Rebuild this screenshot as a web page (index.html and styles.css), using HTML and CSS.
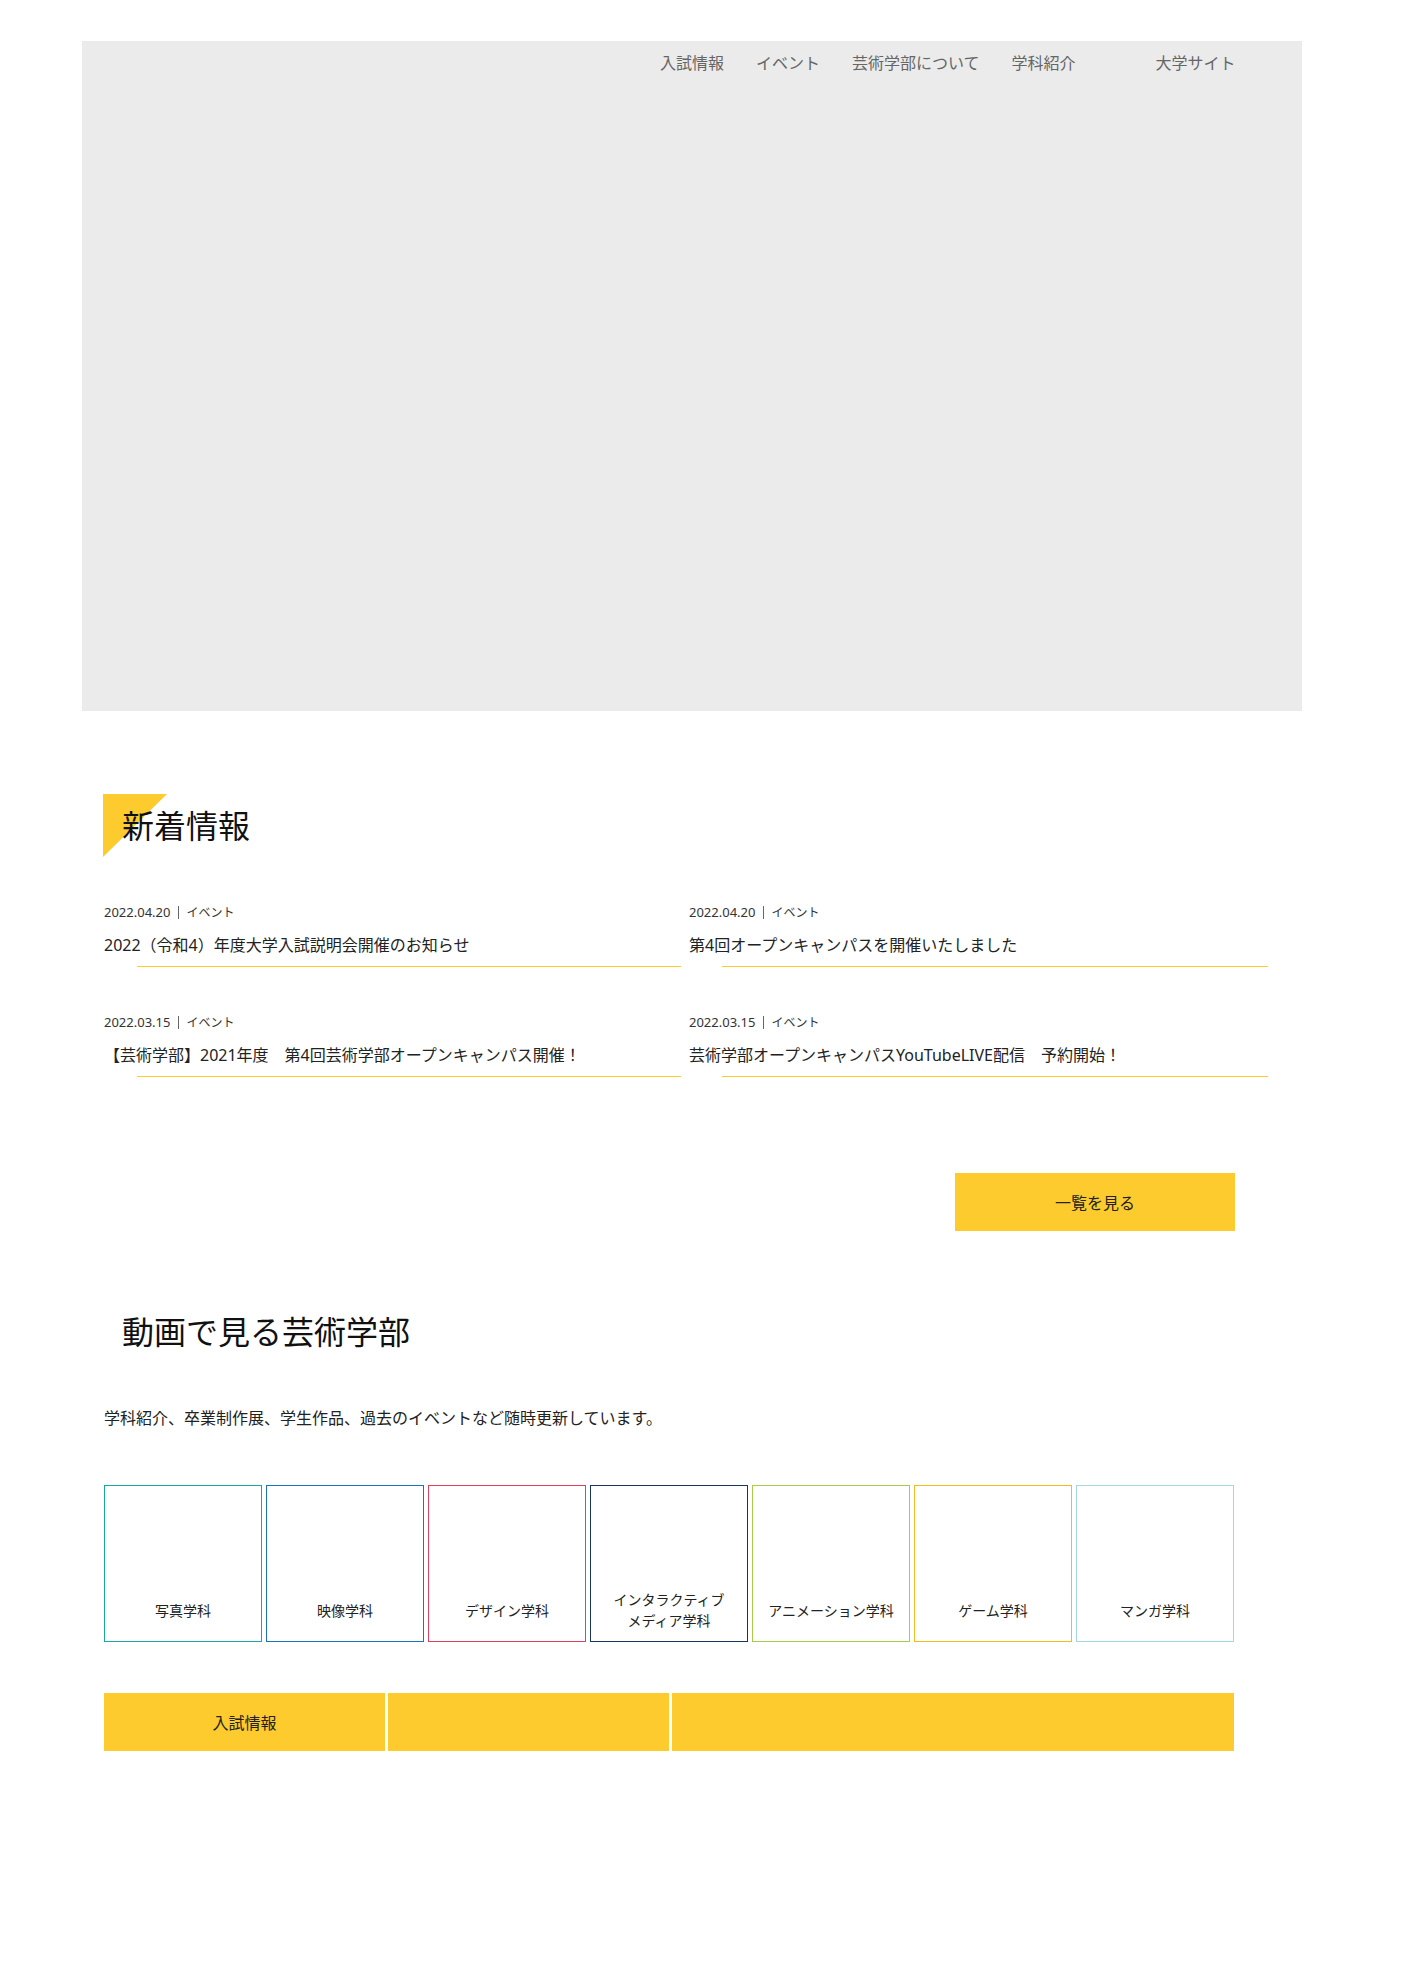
FILE: index.html
```html
<!DOCTYPE html>
<html lang="ja">
<head>
<meta charset="utf-8">
<title>芸術学部</title>
<link rel="stylesheet" href="styles.css">
</head>
<body>
<header class="hero">
  <nav class="gnav">
    <a class="gnav-item">入試情報</a>
    <a class="gnav-item">イベント</a>
    <a class="gnav-item">芸術学部について</a>
    <a class="gnav-item">学科紹介</a>
    <a class="gnav-item gnav-item--univ">大学サイト</a>
  </nav>
</header>
<main class="main">
  <section class="news">
    <h2 class="sec-title sec-title--mark">新着情報</h2>
    <ul class="news-list">
      <li class="news-item">
        <p class="news-meta"><span class="news-date">2022.04.20</span><span class="news-cat">イベント</span></p>
        <p class="news-title">2022（令和4）年度大学入試説明会開催のお知らせ</p>
        <div class="news-rule"></div>
      </li>
      <li class="news-item">
        <p class="news-meta"><span class="news-date">2022.04.20</span><span class="news-cat">イベント</span></p>
        <p class="news-title">第4回オープンキャンパスを開催いたしました</p>
        <div class="news-rule"></div>
      </li>
      <li class="news-item">
        <p class="news-meta"><span class="news-date">2022.03.15</span><span class="news-cat">イベント</span></p>
        <p class="news-title">【芸術学部】2021年度　第4回芸術学部オープンキャンパス開催！</p>
        <div class="news-rule"></div>
      </li>
      <li class="news-item">
        <p class="news-meta"><span class="news-date">2022.03.15</span><span class="news-cat">イベント</span></p>
        <p class="news-title">芸術学部オープンキャンパスYouTubeLIVE配信　予約開始！</p>
        <div class="news-rule"></div>
      </li>
    </ul>
    <div class="more-wrap"><a class="more-btn">一覧を見る</a></div>
  </section>
  <section class="movie">
    <h2 class="sec-title">動画で見る芸術学部</h2>
    <p class="movie-lead">学科紹介、卒業制作展、学生作品、過去のイベントなど随時更新しています。</p>
    <ul class="dept-list">
      <li class="dept dept--photo"><span class="dept-name">写真学科</span></li>
      <li class="dept dept--film"><span class="dept-name">映像学科</span></li>
      <li class="dept dept--design"><span class="dept-name">デザイン学科</span></li>
      <li class="dept dept--media"><span class="dept-name">インタラクティブ<br>メディア学科</span></li>
      <li class="dept dept--anime"><span class="dept-name">アニメーション学科</span></li>
      <li class="dept dept--game"><span class="dept-name">ゲーム学科</span></li>
      <li class="dept dept--manga"><span class="dept-name">マンガ学科</span></li>
    </ul>
  </section>
  <nav class="bottom-links">
    <a class="bl-item">入試情報</a>
    <a class="bl-item"></a>
    <a class="bl-item"></a>
  </nav>
</main>
</body>
</html>
```
FILE: styles.css
```css
body {
  margin: 0;
  background: #fff;
  color: #222;
  font-family: "Noto Sans CJK JP", "Noto Sans", "Liberation Sans", sans-serif;
}

a { color: inherit; text-decoration: none; }

.hero {
  margin: 41px 0 0 82px;
  width: 1220px;
  height: 670px;
  background: #ebebeb;
}

.gnav {
  display: flex;
  padding: 9px 0 0 578px;
}

.gnav-item {
  font-size: 16px;
  line-height: 24px;
  color: #666;
  margin-right: 32px;
}

.gnav-item--univ { margin-left: 48px; }

.main {
  margin-left: 104px;
  width: 1130px;
}

.news { padding-top: 89px; }

.sec-title {
  margin: 0;
  padding-left: 18px;
  font-size: 32px;
  line-height: 48px;
  font-weight: 400;
  color: #111;
  position: relative;
  isolation: isolate;
}

.sec-title--mark::before {
  content: "";
  position: absolute;
  left: -1px;
  top: -6px;
  width: 64px;
  height: 63px;
  background: #fdcb2e;
  clip-path: polygon(0 0, 100% 0, 0 100%);
  z-index: -1;
}

.news-list {
  list-style: none;
  margin: 55px 0 0;
  padding: 0;
  width: 1164px;
  display: grid;
  grid-template-columns: 577px 579px;
  column-gap: 8px;
  row-gap: 46px;
}

.news-item {
  font-family: "Noto Sans", "Noto Sans CJK JP", sans-serif;
}

.news-meta {
  margin: 0;
  display: flex;
  align-items: center;
  font-size: 12px;
  line-height: 18px;
  color: #333;
}

.news-date { font-size: 13px; }

.news-cat {
  margin-left: 8px;
  padding-left: 7px;
  border-left: 1px solid #666;
  line-height: 13px;
}

.news-title {
  margin: 12px 0 0;
  font-size: 16px;
  line-height: 24px;
  color: #222;
}

.news-rule {
  margin: 9px 0 0 33px;
  height: 1px;
  background: #fdcb2e;
}

.more-wrap {
  display: flex;
  justify-content: flex-end;
  margin: 96px -1px 0 0;
}

.more-btn {
  width: 280px;
  height: 58px;
  background: #fdcb2e;
  display: flex;
  align-items: center;
  justify-content: center;
  font-size: 16px;
  color: #222;
}

.movie { padding-top: 75px; }

.movie-lead {
  margin: 51px 0 0;
  font-size: 16px;
  line-height: 24px;
  color: #222;
}

.dept-list {
  list-style: none;
  margin: 56px 0 0;
  padding: 0;
  display: grid;
  grid-template-columns: repeat(7, 158px);
  column-gap: 4px;
}

.dept {
  box-sizing: border-box;
  height: 157px;
  border: 1px solid #ccc;
  display: flex;
  flex-direction: column;
  justify-content: flex-end;
}

.dept-name {
  height: 62px;
  display: flex;
  align-items: center;
  justify-content: center;
  text-align: center;
  font-size: 14px;
  line-height: 21px;
  color: #222;
}

.dept--photo { border-color: #17a9a0; }
.dept--film { border-color: #1a75b5; }
.dept--design { border-color: #e0405a; }
.dept--media { border-color: #17365d; }
.dept--anime { border-color: #a6cc48; }
.dept--game { border-color: #f3bc1e; }
.dept--manga { border-color: #a3d8e0; }

.bottom-links {
  margin-top: 51px;
  display: grid;
  grid-template-columns: 281px 281px 1fr;
  column-gap: 3px;
}

.bl-item {
  height: 58px;
  background: #fdcb2e;
  display: flex;
  align-items: center;
  justify-content: center;
  font-size: 16px;
  color: #222;
}
```
